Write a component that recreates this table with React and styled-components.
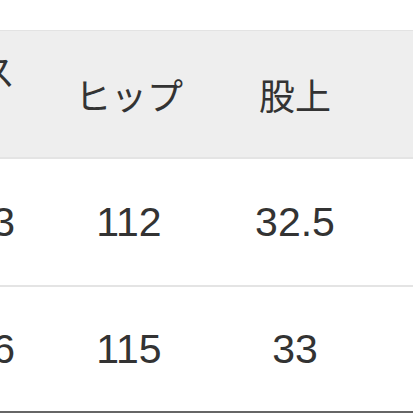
import React from "react";
import styled, { createGlobalStyle } from "styled-components";

const GlobalStyle = createGlobalStyle`
  html, body {
    margin: 0;
    padding: 0;
    background: #ffffff;
    overflow: hidden;
  }
`;

const columns = [
  { key: "waist", label: ["ウエス", "ト"], edge: true },
  { key: "hip", label: ["ヒップ"] },
  { key: "rise", label: ["股上"] },
];

const rows = [
  { waist: "73", hip: "112", rise: "32.5", height: 126, last: false },
  { waist: "76", hip: "115", rise: "33", height: 124, last: true },
];

function App() {
  return (
    <>
      <GlobalStyle />
      <Page>
        <Table>
          <HeaderRow>
            {columns.map((col) => (
              <HeadCell key={col.key} $edge={col.edge}>
                <HeadText>
                  {col.label.map((line, i) => (
                    <span key={i}>{line}</span>
                  ))}
                </HeadText>
              </HeadCell>
            ))}
            <HeadCell />
          </HeaderRow>
          {rows.map((row, i) => (
            <Row key={i} $height={row.height} $last={row.last}>
              {columns.map((col) => (
                <Cell key={col.key} $edge={col.edge}>
                  {row[col.key]}
                </Cell>
              ))}
              <Cell />
            </Row>
          ))}
        </Table>
      </Page>
    </>
  );
}

export default App;

const Page = styled.div`
  width: 413px;
  height: 413px;
  padding-top: 30px;
  box-sizing: border-box;
  overflow: hidden;
`;

const Table = styled.div`
  width: 533px;
  margin-left: -120px;
`;

const HeaderRow = styled.div`
  display: grid;
  grid-template-columns: 166px 166px 166px 1fr;
  height: 129px;
  box-sizing: border-box;
  background: #eeeeee;
  border-top: 1px solid #e3e3e3;
  border-bottom: 2px solid #e4e4e4;
`;

const HeadCell = styled.div`
  display: flex;
  align-items: center;
  justify-content: ${(p) => (p.$edge ? "flex-end" : "center")};
  padding-right: ${(p) => (p.$edge ? "31px" : "0")};
  font-family: "Noto Sans CJK JP", "Noto Sans", sans-serif;
  font-size: 36px;
  line-height: 48px;
  color: #333333;
  white-space: nowrap;
`;

const HeadText = styled.div`
  display: flex;
  flex-direction: column;
  align-items: flex-start;
`;

const Row = styled.div`
  display: grid;
  grid-template-columns: 166px 166px 166px 1fr;
  height: ${(p) => p.$height + 2}px;
  box-sizing: border-box;
  border-bottom: 2px solid ${(p) => (p.$last ? "#666666" : "#e4e4e4")};
`;

const Cell = styled.div`
  display: flex;
  align-items: center;
  justify-content: ${(p) => (p.$edge ? "flex-end" : "center")};
  padding-right: ${(p) => (p.$edge ? "31px" : "0")};
  font-family: "Liberation Sans", Arial, sans-serif;
  font-size: 41px;
  color: #333333;
`;
